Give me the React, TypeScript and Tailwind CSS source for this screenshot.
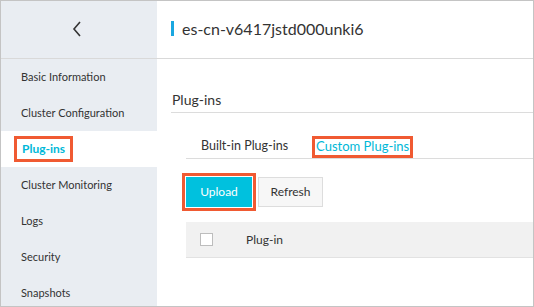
const navItems = [
  "Basic Information",
  "Cluster Configuration",
  "Plug-ins",
  "Cluster Monitoring",
  "Logs",
  "Security",
  "Snapshots",
];

export default function App() {
  return (
    <div
      className="w-[534px] h-[307px] overflow-hidden border border-[#c4c4c4] bg-white text-[#333] flex flex-col"
      style={{ fontFamily: "Lato, 'Liberation Sans', sans-serif" }}
    >
      {/* header row */}
      <div className="flex h-[58px] shrink-0 border-b border-[#d9d9d9]">
        <div className="w-[156px] shrink-0 bg-[#e9edf2] flex items-center justify-center">
          <svg width="10" height="16" viewBox="0 0 10 16" className="mr-[4px] mb-[2px]">
            <path d="M8 1 L2 8 L8 15" fill="none" stroke="#333" strokeWidth="1.6" />
          </svg>
        </div>
        <div className="flex items-center pl-[14px] pb-[2px]">
          <span className="w-[3px] h-[15px] bg-[#1aa7e0] mr-[8px]" />
          <span className="text-[16px]">es-cn-v6417jstd000unki6</span>
        </div>
      </div>

      {/* body */}
      <div className="flex flex-1 min-h-0">
        <nav className="w-[156px] shrink-0 bg-[#e9edf2] flex flex-col">
          {navItems.map((item) =>
            item === "Plug-ins" ? (
              <div key={item} className="h-[36px] shrink-0 bg-white flex items-center pl-[13px]">
                <span className="border-[3px] border-[#f05a32] px-[5px] h-[26px] flex items-center text-[12px] font-bold text-[#00b8d8]">
                  {item}
                </span>
              </div>
            ) : (
              <div key={item} className="h-[36px] shrink-0 flex items-center pl-[20px] text-[11px]">
                {item}
              </div>
            )
          )}
        </nav>

        <main className="flex-1 min-w-0 pl-[14px]">
          <div className="mt-[31px] border-b border-[#dcdcdc] pl-[1px] pb-[2px] leading-[20px] text-[14px]">
            Plug-ins
          </div>

          <div className="pl-[15px]">
            <div className="flex items-end h-[46px] border-b border-[#dcdcdc] text-[13px]">
              <span className="pl-[15px] h-[22px] flex items-center mb-[1px] text-[12.5px]">Built-in Plug-ins</span>
              <span className="ml-[24px] border-[3px] border-[#f05a32] px-[1px] h-[22px] flex items-center text-[#00b8d8]">
                Custom Plug-ins
              </span>
            </div>

            <div className="flex mt-[18px] gap-[6px]">
              <button className="w-[66px] h-[30px] bg-[#00c1de] text-white text-[12px] outline-[3px] outline-solid outline-[#f05a32] outline-offset-[1px]">
                Upload
              </button>
              <button className="w-[65px] h-[30px] bg-[#f7f7f7] border border-[#dddddd] text-[12px]">
                Refresh
              </button>
            </div>

            <div className="mt-[15px] h-[36px] bg-[#f1f1f1] border-b border-[#e2e2e2] flex items-center">
              <span className="ml-[14px] w-[13px] h-[13px] bg-white border border-[#bdbdbd]" />
              <span className="ml-[33px] text-[12px]">Plug-in</span>
            </div>
          </div>
        </main>
      </div>
    </div>
  );
}
